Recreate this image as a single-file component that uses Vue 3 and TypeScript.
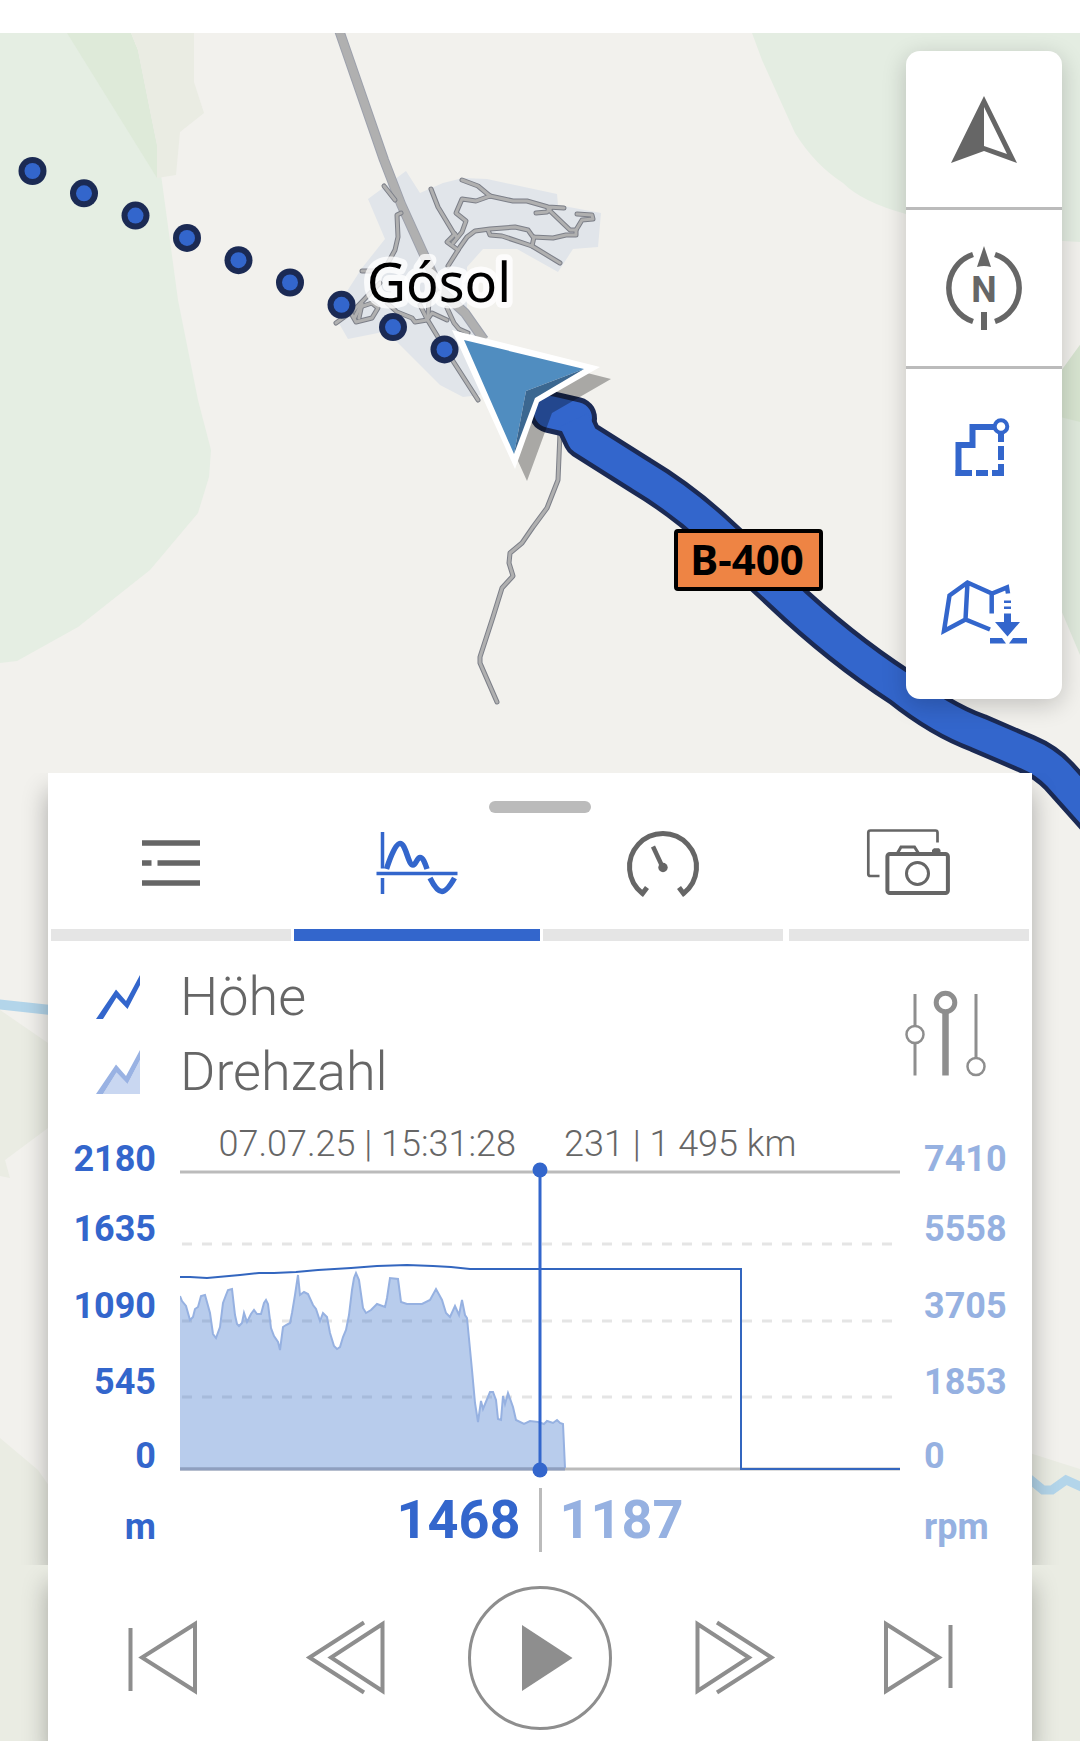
<script setup lang="ts">
import { computed, ref } from 'vue'

type Point = [number, number]

const tabs = ['list', 'chart', 'gauge', 'media'] as const
type Tab = (typeof tabs)[number]
const tabLabels: Record<Tab, string> = {
  list: 'Liste',
  chart: 'Diagramm',
  gauge: 'Anzeige',
  media: 'Medien',
}
const activeTab = ref<Tab>('chart')

const heightTicks = ['2180', '1635', '1090', '545', '0', 'm']
const rpmTicks = ['7410', '5558', '3705', '1853', '0', 'rpm']
const gridLines = [84, 161, 237]

const rpm: Point[] = [
  [0, 136], [2, 141], [6, 146], [10, 160], [13, 157], [15, 149], [18, 147], [21, 136], [25, 135],
  [30, 153], [33, 174], [36, 178], [40, 167], [43, 143], [46, 135], [48, 130], [52, 129], [55, 155],
  [57, 164], [59, 166], [62, 163], [64, 153], [67, 162], [71, 154], [74, 150], [77, 154], [81, 154],
  [84, 143], [86, 140], [88, 144], [91, 168], [94, 176], [98, 182], [100, 190], [103, 167], [106, 165],
  [110, 163], [112, 153], [115, 135], [118, 115], [120, 135], [124, 132], [128, 134], [133, 145],
  [136, 149], [140, 161], [143, 153], [147, 157], [150, 173], [154, 186], [157, 189], [160, 187],
  [163, 177], [166, 170], [169, 155], [172, 130], [174, 118], [176, 113], [179, 120], [183, 148],
  [186, 153], [191, 150], [197, 144], [205, 147], [207, 138], [210, 118], [218, 119], [221, 142],
  [227, 144], [242, 144], [250, 140], [256, 129], [262, 140], [266, 153], [270, 157], [275, 146],
  [279, 155], [282, 140], [285, 155], [287, 158], [292, 210], [295, 243], [298, 262], [301, 241],
  [303, 249], [310, 232], [313, 232], [316, 240], [318, 259], [321, 260], [323, 236], [325, 244],
  [328, 233], [333, 247], [336, 260], [344, 264], [350, 261], [358, 262], [364, 264], [367, 261],
  [373, 263], [377, 260], [380, 263], [383, 264], [385, 308],
]
const altitude: Point[] = [
  [0, 117], [10, 117], [27, 118], [38, 117], [60, 115], [79, 113], [94, 113], [116, 112], [138, 110],
  [171, 108], [197, 106], [227, 105], [253, 106], [271, 107], [290, 109], [360, 109], [561, 109],
  [561, 309], [720, 309],
]
const toLine = (points: Point[]) => points.map((p) => p.join(',')).join(' ')
const rpmLine = computed(() => toLine(rpm))
const rpmArea = computed(() => `0,308 ${toLine(rpm)}`)
const altitudeLine = computed(() => toLine(altitude))

const trackDots = Array.from({ length: 9 }, (_, i) => ({
  x: 32.5 + i * 51.5,
  y: 171 + i * 22.3,
}))

const streets = [
  'M384 186L395 200',
  'M401 213L397 215L398 237L395 250L388 263',
  'M431 189L438 207L453 232L457 237',
  'M462 180L478 186L490 196',
  'M490 196L476 201L462 199L456 213L466 221L462 232L453 243',
  'M490 196L513 201L527 201L548 207L564 208',
  'M536 213L547 212L551 208',
  'M548 209L570 230L576 230L582 220L593 219L592 215L577 214',
  'M576 230L576 235L566 235L553 238L533 237L528 230L515 227L490 229L475 231L467 237L460 247L448 266',
  'M488 230L490 235L502 236L532 246L560 263',
  'M534 237L532 246',
  'M455 234L447 242L458 250',
  'M362 271L376 271',
  'M336 323L354 310L380 283',
  'M352 315L356 322L372 318L378 308L372 303L360 307L355 317',
  'M362 304L359 318',
  'M387 303L397 312L412 318L415 322L427 320L432 313L447 320',
  'M420 305L427 319L444 347L478 400',
  'M429 300L428 317',
  'M447 308L454 323L459 329L468 333',
  'M440 350L452 344',
  'M560 433L558 480L547 508L533 527L522 543L510 553L509 563L513 576L502 588L493 617L480 657L480 663L497 702',
]
const route = 'M574 420L583 439L640 475Q680 499 714 530L782 593Q840 648 900 687Q940 719 978 733L1027 754Q1046 762 1059 776L1100 822'
const routeStart = 'M550 412L576 418'
</script>

<template>
  <div class="page">
    <div class="status-bar"></div>
    <main class="stage">
      <svg class="map" viewBox="0 33 1080 1708" preserveAspectRatio="xMidYMin slice" role="img" aria-label="Karte">
        <rect y="33" width="1080" height="1708" fill="#f2f1ed" />
        <path fill="#e5eee3" d="M0 33H131L157 145L178 300L198 400L211 450L209 477L198 513L150 570L78 627L17 661L0 663Z" />
        <path fill="#deead9" d="M67 33H131L138 50L157 145V178Z" />
        <path fill="#eaece3" d="M131 33H194V82L204 113L180 132L176 175L157 178V145L138 50Z" />
        <path fill="#e4ede2" d="M752 33L762 60L795 133Q815 165 843 183Q862 202 906 214L1010 238L1080 242V33Z" />
        <path fill="#dfe9dc" d="M1080 345L1040 400V560L1080 655Z" />
        <path fill="#d7e4d0" d="M1080 345L1040 400V412L1080 422Z" />
        <path fill="#eaece3" d="M0 1010L48 1043V1128L5 1160L10 1178L0 1176Z" />
        <path fill="#eaece3" d="M0 1438L38 1470L52 1490L1020 1450L1080 1469V1741H0Z" />
        <path fill="none" stroke="#b3d5ea" stroke-width="10" d="M-4 1004L60 1011" />
        <path fill="none" stroke="#b3d5ea" stroke-width="9" d="M1026 1476L1043 1490L1052 1490L1066 1480L1084 1488" />

        <path fill="#e1e5ea" d="M406 171L420 193L443 183L463 178L487 179L557 194L558 205L601 213L598 247L573 249L558 272L517 249H483L467 267V310L490 350L480 395L463 397L440 385L397 342L383 332L348 339L333 313L362 268L385 239L368 199Z" />
        <g fill="none" stroke-linejoin="round">
          <path stroke="#9da1ac" stroke-width="10" d="M339 30L384 160L401 204L440 290L465 313L484 340" />
          <path stroke="#b0b0b0" stroke-width="8" d="M339 30L384 160L401 204L440 290L465 313L484 340" />
          <g stroke-linecap="round">
            <path v-for="d in streets" :key="d" :d="d" stroke="#7c7f88" stroke-width="5" />
            <path v-for="d in streets" :key="d" :d="d" stroke="#b0b0b0" stroke-width="3" />
          </g>
          <path :d="routeStart" stroke="#1b2a54" stroke-width="42" stroke-linecap="round" />
          <path :d="route" stroke="#1b2a54" stroke-width="40" />
          <path :d="routeStart" stroke="#3366cc" stroke-width="32" stroke-linecap="round" />
          <path :d="route" stroke="#3366cc" stroke-width="31" />
        </g>

        <text class="place" x="439" y="302" text-anchor="middle">Gósol</text>
        <g v-for="dot in trackDots" :key="dot.x">
          <circle :cx="dot.x" :cy="dot.y" r="14" fill="#1b2a54" />
          <circle :cx="dot.x" :cy="dot.y" r="8" fill="#3366cc" />
        </g>

        <path fill="#000" fill-opacity="0.3" d="M464 342L611 379L552 413L527 481Z" />
        <path fill="#fff" d="M452 330L600 367L539 402L515 469Z" />
        <path fill="#508dc0" d="M464 340L584 369L526 391L514 454Z" />
        <path fill="#3b6790" d="M584 369L526 391L514 454L535 398Z" />

        <rect x="676" y="531" width="145" height="58" rx="2" fill="#ee8444" stroke="#000" stroke-width="4" />
        <text class="road-no" x="747" y="575" text-anchor="middle">B-400</text>
      </svg>

      <nav class="toolbar" aria-label="Kartenwerkzeuge">
        <button type="button" aria-label="Position">
          <svg viewBox="0 0 156 156">
            <path fill="#666" fill-rule="evenodd" d="M78 45L111 112L78 100L45 112ZM78 56V95L101 103Z" />
          </svg>
        </button>
        <button type="button" aria-label="Norden">
          <svg viewBox="0 0 156 156">
            <path fill="#666" d="M78 36L85 57Q78 55 71 57ZM75 102H81V120H75Z" />
            <path fill="none" stroke="#666" stroke-width="5.5" d="M67 44.5A35.3 35.3 0 0 0 67 111.5M89 44.5A35.3 35.3 0 0 1 89 111.5" />
            <text class="north" x="78" y="92" text-anchor="middle">N</text>
          </svg>
        </button>
        <div class="group">
          <button type="button" aria-label="Bereich">
            <svg viewBox="0 0 156 156" fill="none" stroke="#3366cc" stroke-width="6">
              <path d="M88 58H66.5V76H52.5V104H66M70 104H82M86 104H95V95M95 91V77M95 73V65" />
              <path d="M49.5 104H54M95 104H98M95 103V107" />
              <circle cx="95" cy="57.5" r="6.3" stroke-width="4" />
            </svg>
          </button>
          <button type="button" aria-label="Karte laden">
            <svg viewBox="0 0 156 156">
              <path fill="none" stroke="#3366cc" stroke-width="4.5" d="M84 95.5L59.5 85.5L38 97L43.5 61.5L61.5 48.5L86 59.5L101 53.5L102 59.5M61.5 48.5L59.5 85.5M85.7 59.5V79.5" />
              <path fill="#3366cc" d="M98 66.5H105V69H98ZM98 72.5H105V75H98ZM98 79.5H105V88H114L101.5 102.5L89 88H98ZM84 104H96L100 109.5H84ZM103 109.5L107 104H121V109.5Z" />
            </svg>
          </button>
        </div>
      </nav>

      <section class="sheet">
        <div class="card">
          <div class="handle"></div>
          <div class="tabs" role="tablist">
            <button
              v-for="tab in tabs"
              :key="tab"
              type="button"
              role="tab"
              class="tab"
              :class="{ active: tab === activeTab }"
              :aria-label="tabLabels[tab]"
              :aria-selected="tab === activeTab"
              @click="activeTab = tab"
            >
              <svg viewBox="0 0 100 80" fill="none" stroke="currentColor">
                <path v-if="tab === 'list'" stroke-width="5.5" d="M21 20H79M21 40H30.5M36.5 40H79M21 60H79" />
                <template v-else-if="tab === 'chart'">
                  <path stroke-width="3.5" d="M15.5 9V45.5M15.5 55V71M9.5 50.5H90.5" />
                  <path stroke-width="5.5" d="M19.500 46C24 32 29 20.500 33 20.500C39 20.500 41 42 46 42C49 42 50 34.500 53 34.500C56 34.500 58 40 60 46M63 55C67 63 71 68.500 75 68.500C79 68.500 83 63 87.500 55" />
                </template>
                <template v-else-if="tab === 'gauge'">
                  <path stroke-width="5" d="M34 64.5L29.5 70.5A33.5 33.5 0 1 1 70.5 70.5L66 64.5" />
                  <path stroke-width="4.5" d="M40 23.5L50 45" />
                  <circle cx="50" cy="44.5" r="4.7" fill="currentColor" stroke="none" />
                </template>
                <template v-else>
                  <path stroke-width="2.7" d="M78.5 19.5V9.5Q78.5 7.5 76.5 7.5H11.5Q9.3 7.5 9.3 9.5V51Q9.3 53 11.5 53H20.5" />
                  <rect x="28.4" y="31" width="60.5" height="39" rx="2.5" stroke-width="4" />
                  <path stroke-width="3" d="M38 31L42 24H55.5L60 31" />
                  <path stroke="none" fill="currentColor" d="M73 30V27L75 25.3H80L81.5 27V30Z" />
                  <circle cx="58.5" cy="50.5" r="11" stroke-width="3" />
                </template>
              </svg>
              <span class="bar"></span>
            </button>
          </div>

          <div class="legend">
            <ul>
              <li>
                <svg viewBox="0 0 44 44">
                  <path fill="#3366cc" d="M0 44L20 14.5L30 26L44 0V10L31.5 34L20.5 22.5L7 44Z" />
                </svg>
                Höhe
              </li>
              <li>
                <svg viewBox="0 0 44 44">
                  <path fill="#c9d7f1" d="M7 44L20.5 22.5L31.5 34L44 10V44Z" />
                  <path fill="#99b2e3" d="M0 44L20 14.5L30 26L44 0V10L31.5 34L20.5 22.5L7 44Z" />
                </svg>
                Drehzahl
              </li>
            </ul>
            <button type="button" class="settings" aria-label="Einstellungen">
              <svg viewBox="0 0 90 90" fill="none" stroke="#8e8e8e" stroke-width="3">
                <path d="M15 5V37M15 54.5V86.5M76 5V69" />
                <circle cx="15" cy="45.5" r="8.5" stroke-width="2.5" />
                <circle cx="76" cy="77.5" r="8.5" stroke-width="2.500" />
                <path stroke-width="6.5" d="M45.5 24V86.5" />
                <circle cx="45.5" cy="13.5" r="9.3" stroke-width="5" />
              </svg>
            </button>
          </div>

          <div class="chart">
            <div class="axis left">
              <span v-for="tick in heightTicks" :key="tick">{{ tick }}</span>
            </div>
            <div class="plot">
              <div class="caption">
                <span>07.07.25 | 15:31:28</span>
                <span>231 | 1 495 km</span>
              </div>
              <svg class="graph" viewBox="0 0 720 320" preserveAspectRatio="none" role="img" aria-label="Verlauf">
                <path v-for="y in gridLines" :key="y" :d="`M2 ${y}H712`" stroke="#e5e5e5" stroke-width="3" stroke-dasharray="10 10" />
                <path d="M0 12H720M0 309H720" stroke="#bbb" stroke-width="3" />
                <polygon :points="rpmArea" fill="#336ec8" fill-opacity="0.35" />
                <polyline :points="rpmLine" fill="none" stroke="#96b1e1" stroke-width="2" />
                <path d="M0 309H385" stroke="#8f9fbf" stroke-width="3" />
                <polyline :points="altitudeLine" fill="none" stroke="#3366bf" stroke-width="2" />
                <path d="M360 10V310" stroke="#3366cc" stroke-width="3" />
                <circle cx="360" cy="10" r="7.5" fill="#3366cc" />
                <circle cx="360" cy="310" r="7.5" fill="#3366cc" />
              </svg>
              <div class="readout">
                <strong>1468</strong>
                <i></i>
                <strong class="pale">1187</strong>
              </div>
            </div>
            <div class="axis right">
              <span v-for="tick in rpmTicks" :key="tick">{{ tick }}</span>
            </div>
          </div>
        </div>

        <div class="card player">
          <button type="button" aria-label="Anfang">
            <svg viewBox="0 0 90 90"><path d="M13.5 15V78M78 11V78L25 44.5Z" /></svg>
          </button>
          <button type="button" aria-label="Zurück">
            <svg viewBox="0 0 90 90"><path d="M64 9.5L9.5 44.5L64 79.500M82.5 11V78L31 44.5Z" /></svg>
          </button>
          <button type="button" class="play" aria-label="Abspielen">
            <svg viewBox="0 0 90 90"><path class="solid" d="M27 12L77.5 45L27 78Z" /></svg>
          </button>
          <button type="button" aria-label="Vor">
            <svg viewBox="0 0 90 90"><path d="M26 9.5L80.5 44.5L26 79.5M6.5 11V78L58 44.5Z" /></svg>
          </button>
          <button type="button" aria-label="Ende">
            <svg viewBox="0 0 90 90"><path d="M76.5 12V75M12 11V78L65 44.5Z" /></svg>
          </button>
        </div>
      </section>
    </main>
  </div>
</template>

<style>
body {
  background: #fff;
}
</style>

<style scoped>
* {
  box-sizing: border-box;
}
button {
  padding: 0;
  border: 0;
  background: none;
  font: inherit;
  cursor: pointer;
}
svg {
  display: block;
}
.page {
  display: flex;
  flex-direction: column;
  min-height: 100vh;
  font-family: Roboto, sans-serif;
  color: #666;
}
.status-bar {
  height: 33px;
  background: #fff;
}
.stage {
  position: relative;
  flex: 1;
  display: flex;
  flex-direction: column;
  justify-content: flex-end;
  overflow: hidden;
}
.map {
  position: absolute;
  inset: 0;
  width: 100%;
  height: 100%;
}
.place {
  font: 400 54px 'Noto Sans', sans-serif;
  fill: #000;
  stroke: rgba(255, 255, 255, 0.8);
  stroke-width: 12px;
  stroke-linejoin: round;
  paint-order: stroke;
}
.road-no {
  font: 700 42px 'Noto Sans', sans-serif;
  fill: #000;
}
.toolbar {
  position: absolute;
  top: 18px;
  right: 18px;
  width: 156px;
  border-radius: 14px;
  background: #fff;
  box-shadow: 0 6px 24px rgba(0, 0, 0, 0.2);
}
.toolbar button {
  display: block;
  width: 156px;
  height: 156px;
}
.toolbar > button {
  height: 159px;
  border-bottom: 3px solid #bbb;
}
.group {
  display: flex;
  flex-direction: column;
  gap: 9px;
  padding-bottom: 9px;
}
.north {
  font: 700 36px Roboto, sans-serif;
  fill: #666;
}
.sheet {
  position: relative;
  margin: 0 48px;
}
.card {
  background: #fff;
  box-shadow: 0 18px 24px rgba(0, 0, 0, 0.3);
  clip-path: inset(0 -48px);
}
.handle {
  width: 102px;
  height: 12px;
  margin: 0 auto;
  border-radius: 6px;
  background: #bbb;
}
.card:first-child {
  padding-top: 28px;
}
.tabs {
  display: grid;
  grid-template-columns: repeat(4, 1fr);
}
.tab {
  display: flex;
  flex-direction: column;
  align-items: center;
  justify-content: space-between;
  height: 128px;
  padding-top: 10px;
  color: #666;
}
.tab svg {
  width: 100px;
  height: 80px;
}
.tab .bar {
  width: calc(100% - 6px);
  height: 12px;
  background: #e5e5e5;
}
.tab.active {
  color: #3366cc;
}
.tab.active .bar {
  width: 100%;
  background: #3366cc;
}
.legend {
  display: flex;
  justify-content: space-between;
  align-items: center;
  padding: 18px 42px 0 48px;
}
.legend ul {
  margin: 0;
  padding: 0;
  list-style: none;
}
.legend li {
  display: flex;
  align-items: center;
  gap: 40px;
  font-size: 54px;
  font-weight: 300;
  line-height: 75px;
}
.legend li svg {
  width: 44px;
  height: 44px;
}
.settings svg {
  width: 90px;
  height: 90px;
}
.chart {
  display: grid;
  grid-template-columns: 132px 1fr 132px;
}
.axis {
  display: grid;
  grid-template-rows: 70px 77px 76px 74px 71px 42px;
  align-content: start;
  padding-top: 29px;
  font-size: 36px;
  font-weight: 700;
  line-height: 42px;
}
.left {
  padding-right: 24px;
  text-align: right;
  color: #3366cc;
}
.right {
  padding-left: 24px;
  color: #96b1e1;
}
.caption {
  display: grid;
  grid-template-columns: 1fr 1fr;
  gap: 48px;
  height: 51px;
  padding-top: 14px;
  font-size: 36px;
  font-weight: 300;
  line-height: 42px;
  white-space: nowrap;
}
.caption span:first-child {
  text-align: right;
}
.graph {
  width: 100%;
  height: 320px;
}
.readout {
  display: grid;
  grid-template-columns: 1fr 3px 1fr;
  gap: 18px;
  padding: 8px 0 13px;
  font-size: 54px;
  line-height: 64px;
  color: #3366cc;
}
.readout strong:first-child {
  text-align: right;
}
.readout i {
  background: #bbb;
}
.readout .pale {
  color: #96b1e1;
}
.player {
  display: grid;
  grid-template-columns: 1fr 1fr 208px 1fr 1fr;
  align-items: center;
  justify-items: center;
  height: 176px;
  padding: 9px 22px 0;
}
.player svg {
  width: 90px;
  height: 90px;
  fill: none;
  stroke: #8e8e8e;
  stroke-width: 4px;
}
.player .solid {
  fill: #8e8e8e;
  stroke: none;
}
.player .play {
  display: flex;
  align-items: center;
  justify-content: center;
  width: 144px;
  height: 144px;
  border: 3px solid #8e8e8e;
  border-radius: 50%;
}
</style>
